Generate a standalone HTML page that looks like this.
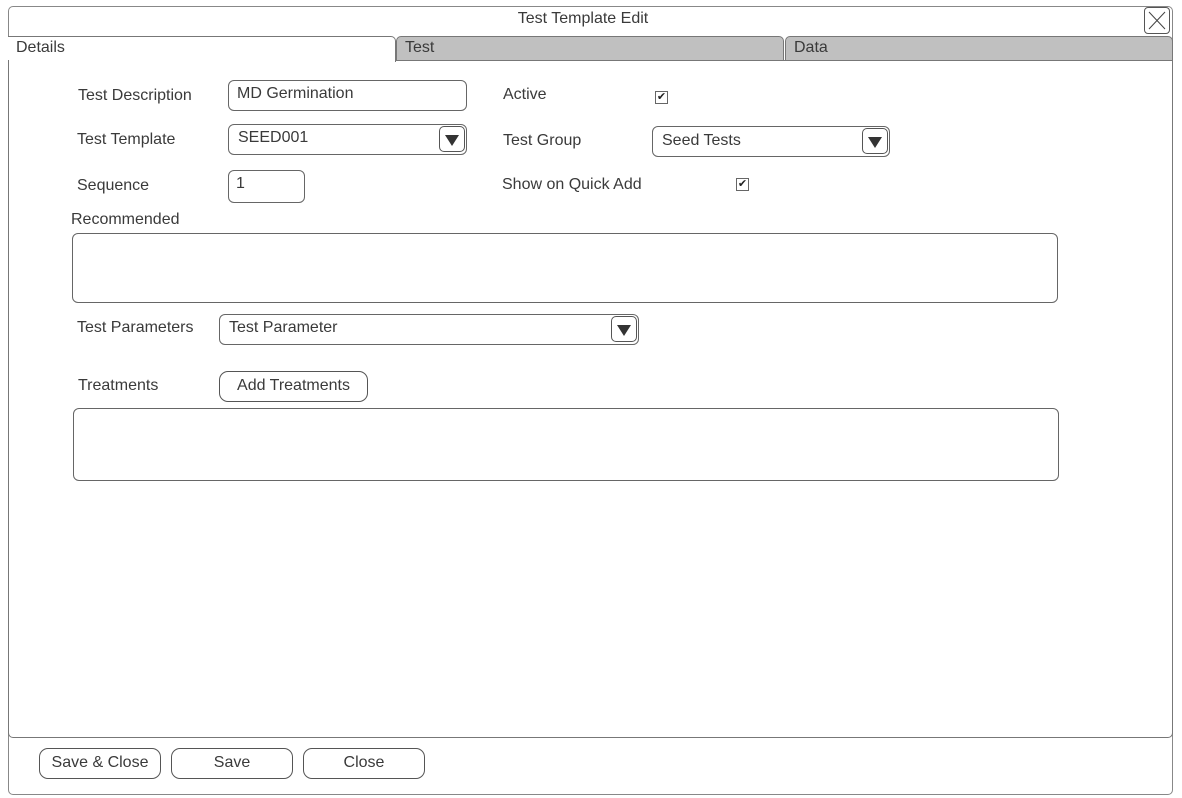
<!DOCTYPE html><html><head><style>
body{margin:0;width:1182px;height:798px;background:#fff;font-family:"Liberation Sans",sans-serif;color:#3a3a3a;font-size:16px;position:relative;overflow:hidden}
.a{position:absolute}
.box{position:absolute;border:1px solid #666;border-radius:6px;background:#fff;box-sizing:border-box}
.t{position:absolute;white-space:nowrap}
.dd{position:absolute;width:26px;height:26px;border:1px solid #555;border-radius:5px;box-sizing:border-box;top:1px;right:1px;background:#fff}
.dd:after{content:"";position:absolute;left:5px;top:8px;border-left:7px solid transparent;border-right:7px solid transparent;border-top:11px solid #333}
.cb{position:absolute;width:13px;height:13px;border:1px solid #666;box-sizing:border-box;font-size:11px;line-height:11px;text-align:center;color:#222}
.btn{position:absolute;border:1px solid #555;border-radius:9px;box-sizing:border-box;text-align:center;line-height:28px;background:#fff}
</style></head><body>
<div class="a" style="left:8px;top:6px;width:1165px;height:789px;border:1px solid #888;border-radius:5px;box-sizing:border-box"></div>
<div class="t" style="left:0;width:1166px;top:10px;text-align:center">Test Template Edit</div>
<div class="a" style="left:1144px;top:7px;width:26px;height:27px;border:1px solid #555;border-radius:4px;box-sizing:border-box"><svg width="24" height="25"><path d="M4 4L20 21M20 4L4 21" stroke="#444" stroke-width="1"/></svg></div>
<div class="a" style="left:396px;top:36px;width:388px;height:25px;background:#c0c0c0;border:1px solid #777;border-radius:5px 5px 0 0;box-sizing:border-box"></div>
<div class="a" style="left:785px;top:36px;width:388px;height:25px;background:#c0c0c0;border:1px solid #777;border-radius:5px 5px 0 0;box-sizing:border-box"></div>
<div class="a" style="left:8px;top:36px;width:388px;height:26px;border-top:1px solid #777;border-right:1px solid #777;border-radius:0 5px 0 0;box-sizing:border-box;background:#fff"></div>
<div class="a" style="left:8px;top:60px;width:1165px;height:678px;border:1px solid #777;border-top:none;border-radius:0 0 5px 5px;box-sizing:border-box"></div>
<div class="a" style="left:396px;top:60px;width:777px;height:1px;background:#777"></div>
<div class="t" style="left:16px;top:39px">Details</div>
<div class="t" style="left:405px;top:39px">Test</div>
<div class="t" style="left:794px;top:39px">Data</div>

<div class="t" style="left:78px;top:87px">Test Description</div>
<div class="box" style="left:228px;top:80px;width:239px;height:31px"></div>
<div class="t" style="left:237px;top:85px">MD Germination</div>
<div class="t" style="left:503px;top:86px">Active</div>
<div class="cb" style="left:655px;top:91px">✔</div>

<div class="t" style="left:77px;top:131px">Test Template</div>
<div class="box" style="left:228px;top:124px;width:239px;height:31px"><div class="dd"></div></div>
<div class="t" style="left:238px;top:129px">SEED001</div>
<div class="t" style="left:503px;top:132px">Test Group</div>
<div class="box" style="left:652px;top:126px;width:238px;height:31px"><div class="dd"></div></div>
<div class="t" style="left:662px;top:132px">Seed Tests</div>

<div class="t" style="left:77px;top:177px">Sequence</div>
<div class="box" style="left:228px;top:170px;width:77px;height:33px"></div>
<div class="t" style="left:236px;top:175px">1</div>
<div class="t" style="left:502px;top:176px">Show on Quick Add</div>
<div class="cb" style="left:736px;top:178px">✔</div>

<div class="t" style="left:71px;top:211px">Recommended</div>
<div class="box" style="left:72px;top:233px;width:986px;height:70px"></div>

<div class="t" style="left:77px;top:319px">Test Parameters</div>
<div class="box" style="left:219px;top:314px;width:420px;height:31px"><div class="dd"></div></div>
<div class="t" style="left:229px;top:319px">Test Parameter</div>

<div class="t" style="left:78px;top:377px">Treatments</div>
<div class="btn" style="left:219px;top:371px;width:149px;height:31px">Add Treatments</div>
<div class="box" style="left:73px;top:408px;width:986px;height:73px"></div>

<div class="btn" style="left:39px;top:748px;width:122px;height:31px">Save &amp; Close</div>
<div class="btn" style="left:171px;top:748px;width:122px;height:31px">Save</div>
<div class="btn" style="left:303px;top:748px;width:122px;height:31px">Close</div>
</body></html>
